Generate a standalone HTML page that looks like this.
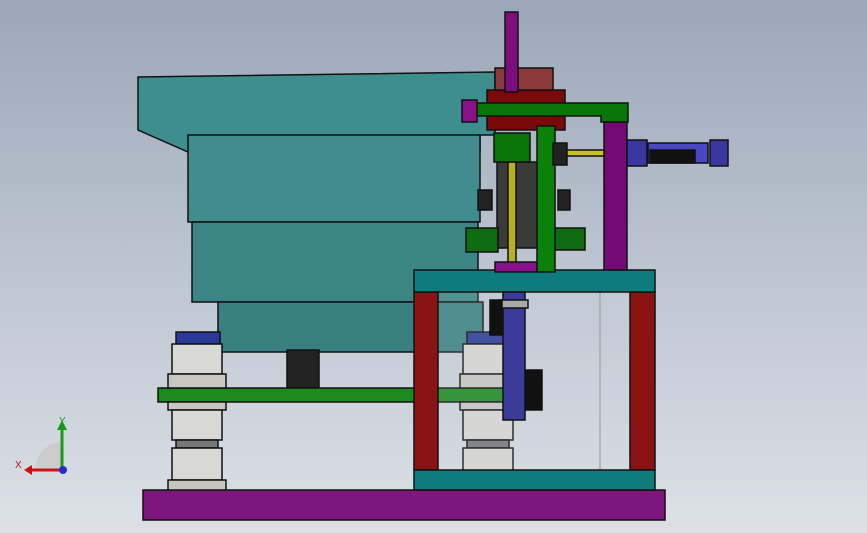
<!DOCTYPE html>
<html><head><style>
html,body{margin:0;padding:0}
body{width:867px;height:533px;overflow:hidden;background:linear-gradient(#9ba7b8 0%,#b9c2ce 45%,#dde1e7 100%);font-family:"Liberation Sans",sans-serif}
svg{position:absolute;left:0;top:0}
</style></head><body>
<svg width="867" height="533" viewBox="0 0 867 533">
<g stroke="#111" stroke-width="1.5">
<!-- bowl -->
<path d="M138 77 L495 72 L495 135 L480 135 L480 152 L188 152 L138 130 Z" fill="#3f8e8e"/>
<rect x="188" y="135" width="292" height="87" fill="#418c8c"/>
<rect x="192" y="222" width="286" height="80" fill="#3c8585"/>
<rect x="218" y="302" width="265" height="50" fill="#3a8080"/>
<rect x="287" y="350" width="32" height="38" fill="#222"/>
<!-- green plate -->
<rect x="158" y="388" width="355" height="14" fill="#1d8a1d"/>
<!-- left stack -->
<rect x="176" y="332" width="44" height="12" fill="#2a3a9a"/>
<rect x="172" y="344" width="50" height="30" fill="#d8d8d4"/>
<rect x="168" y="374" width="58" height="14" fill="#c7c7c0"/>
<rect x="168" y="402" width="58" height="8" fill="#c7c7c0"/>
<rect x="172" y="410" width="50" height="30" fill="#d8d8d4"/>
<rect x="176" y="440" width="42" height="8" fill="#777"/>
<rect x="172" y="448" width="50" height="32" fill="#d8d8d4"/>
<rect x="168" y="480" width="58" height="12" fill="#c7c7c0"/>
<!-- right stack -->
<rect x="467" y="332" width="44" height="12" fill="#2a3a9a"/>
<rect x="463" y="344" width="50" height="30" fill="#d8d8d4"/>
<rect x="460" y="374" width="56" height="14" fill="#c7c7c0"/>
<rect x="460" y="402" width="56" height="8" fill="#c7c7c0"/>
<rect x="463" y="410" width="50" height="30" fill="#d8d8d4"/>
<rect x="467" y="440" width="42" height="8" fill="#777"/>
<rect x="463" y="448" width="50" height="28" fill="#d8d8d4"/>
<!-- base -->
<rect x="143" y="490" width="522" height="30" fill="#7d167d"/>
<!-- frame -->
<rect x="438" y="292" width="192" height="178" fill="#d0d5dc" stroke="none" opacity="0.15"/>
<line x1="600" y1="292" x2="600" y2="470" stroke="#999" stroke-width="1"/>
<rect x="414" y="292" width="24" height="178" fill="#8a1414"/>
<rect x="630" y="292" width="25" height="178" fill="#8a1414"/>
<rect x="414" y="270" width="241" height="22" fill="#0e7c7c"/>
<rect x="414" y="470" width="241" height="20" fill="#0e7c7c"/>
<!-- cylinder -->
<rect x="503" y="292" width="22" height="128" fill="#3b3b9a"/>
<rect x="500" y="300" width="28" height="8" fill="#aaa"/>
<rect x="526" y="370" width="16" height="40" fill="#111"/>
<rect x="490" y="300" width="12" height="35" fill="#111"/>
<!-- top mechanism -->
<rect x="497" y="162" width="42" height="86" fill="#3a3a3a"/>
<rect x="478" y="190" width="14" height="20" fill="#222"/>
<rect x="558" y="190" width="12" height="20" fill="#222"/>
<rect x="466" y="228" width="32" height="24" fill="#0f6b0f"/>
<rect x="555" y="228" width="30" height="22" fill="#0f6b0f"/>
<rect x="508" y="162" width="8" height="103" fill="#b8b020"/>
<rect x="495" y="262" width="42" height="10" fill="#8a108a"/>
<rect x="495" y="68" width="58" height="24" fill="#8a3a3a"/>
<rect x="487" y="90" width="78" height="40" fill="#7a0a0a"/>
<rect x="505" y="12" width="13" height="80" fill="#7d0f7d"/>
<rect x="604" y="122" width="23" height="148" fill="#740a74"/>
<path d="M474 103 L628 103 L628 122 L601 122 L601 116 L474 116 Z" fill="#087508"/>
<rect x="462" y="100" width="15" height="22" fill="#8a108a"/>
<rect x="494" y="133" width="36" height="29" fill="#087508"/>
<rect x="537" y="126" width="18" height="146" fill="#0a820a"/>
<rect x="553" y="143" width="14" height="22" fill="#222"/>
<rect x="567" y="150" width="37" height="6" fill="#c8c020"/>
<rect x="627" y="140" width="20" height="26" fill="#3838a0"/>
<rect x="648" y="143" width="60" height="20" fill="#4848c0"/>
<rect x="650" y="150" width="45" height="13" fill="#111"/>
<rect x="710" y="140" width="18" height="26" fill="#3838a0"/>
</g>
<!-- axis triad -->
<path d="M35 470 A28 28 0 0 1 62 442 L62 470 Z" fill="#ccc"/>
<line x1="62" y1="470" x2="62" y2="428" stroke="#1a9a1a" stroke-width="3"/>
<path d="M57 430 L62 420 L67 430 Z" fill="#1a9a1a"/>
<line x1="62" y1="470" x2="30" y2="470" stroke="#d01010" stroke-width="3"/>
<path d="M32 465 L24 470 L32 475 Z" fill="#d01010"/>
<circle cx="63" cy="470" r="4" fill="#2030d0"/>
<text x="59" y="424" font-size="10" fill="#1a9a1a">Y</text>
<text x="15" y="468" font-size="10" fill="#d01010">X</text>
</svg>
</body></html>
